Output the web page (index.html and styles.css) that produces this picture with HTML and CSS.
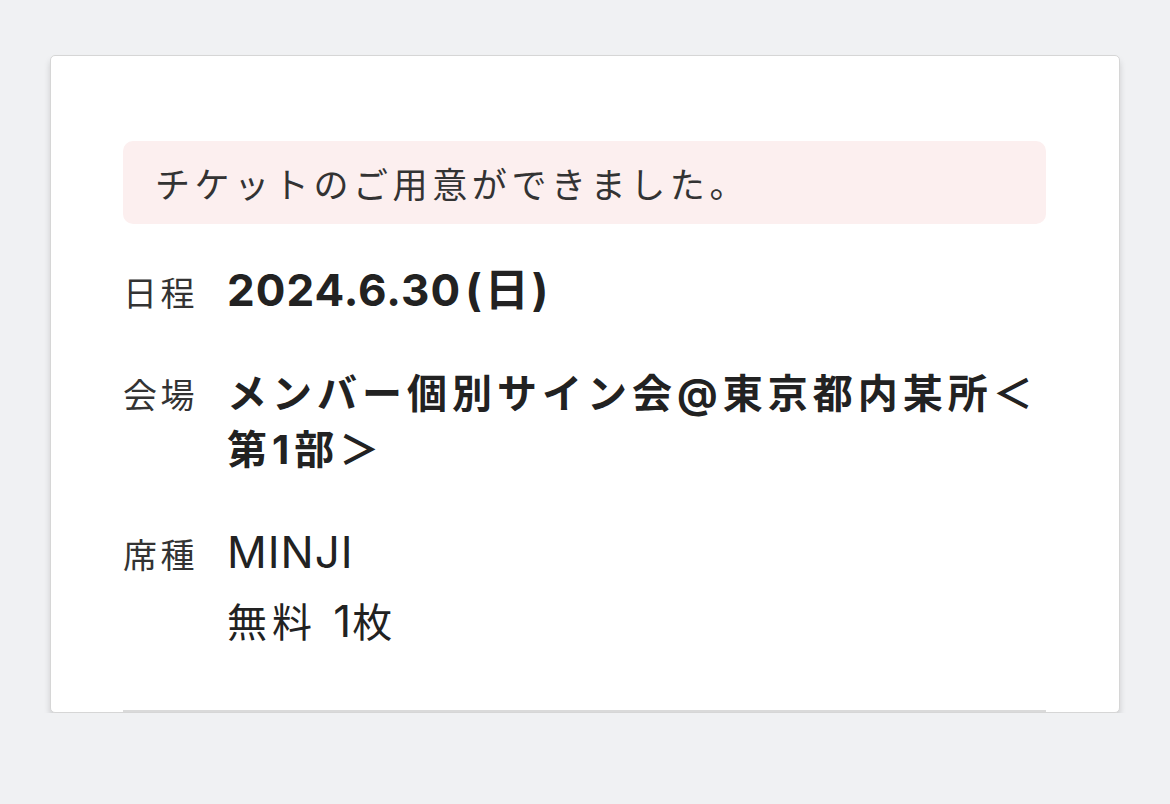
FILE: index.html
```html
<!DOCTYPE html>
<html lang="ja">
<head>
<meta charset="utf-8">
<title>チケット</title>
<link rel="stylesheet" href="styles.css">
</head>
<body>
<main class="page">
  <section class="card">
    <p class="notice">チケットのご用意ができました。</p>
    <dl class="details">
      <div class="row">
        <dt>日程</dt>
        <dd><strong><span class="latin">2024.6.30</span><span class="weekday">(日)</span></strong></dd>
      </div>
      <div class="row">
        <dt>会場</dt>
        <dd><strong>メンバー個別サイン会@東京都内某所＜第1部＞</strong></dd>
      </div>
      <div class="row">
        <dt>席種</dt>
        <dd>
          <p class="seat latin">MINJI</p>
          <p class="qty">無料 <span class="latin">1</span>枚</p>
        </dd>
      </div>
    </dl>
    <hr class="divider">
  </section>
</main>
</body>
</html>
```

FILE: styles.css
```css
html, body {
  margin: 0;
  padding: 0;
}
body {
  background: #f0f1f3;
  font-family: "Inter", "Noto Sans CJK JP", sans-serif;
  color: #222;
}
.page {
  padding: 55px 50px 0;
}
.card {
  background: #fff;
  border: 1px solid #d6d6d6;
  border-radius: 5px;
  box-shadow: 0 5px 6px rgba(0, 0, 0, 0.15);
  padding: 85px 73px 0 72px;
}
.notice {
  margin: 0;
  height: 83px;
  box-sizing: border-box;
  background: #fcefef;
  border-radius: 10px;
  padding: 0 32px;
  display: flex;
  align-items: center;
  font-family: "Noto Sans CJK JP", sans-serif;
  font-size: 35px;
  letter-spacing: 4.6px;
  color: #333;
}
.details {
  margin: 38px 0 0;
  display: flex;
  flex-direction: column;
  gap: 46px;
}
.row {
  display: flex;
  align-items: baseline;
}
.row dt {
  flex: none;
  width: 104px;
  font-family: "Noto Sans CJK JP", sans-serif;
  font-size: 34px;
  letter-spacing: 0.1em;
  line-height: 56px;
  color: #333;
}
.row dd {
  margin: 0;
  flex: 1;
  font-size: 40px;
  letter-spacing: 5px;
  line-height: 56px;
  color: #222;
}
.row strong {
  font-weight: 700;
}
.row dd p {
  margin: 0;
}
.row dd .qty {
  margin-top: 13px;
}
.latin {
  font-family: "Inter", sans-serif;
  font-size: 44px;
  letter-spacing: 1px;
}
.weekday {
  font-size: 44px;
  letter-spacing: 3px;
  margin-left: 4px;
}
.divider {
  margin: 59px 0 0;
  border: 0;
  height: 2px;
  background: #dadada;
}
```
